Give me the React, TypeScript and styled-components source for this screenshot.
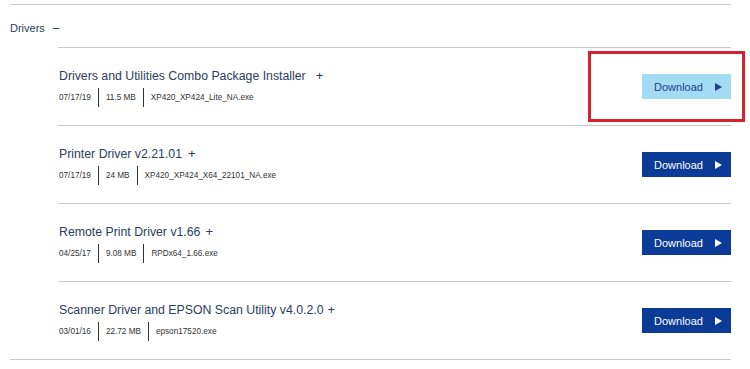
import styled, { createGlobalStyle } from 'styled-components';

const GlobalStyle = createGlobalStyle`
  body {
    margin: 0;
    background: #fff;
    font-family: "Liberation Sans", Arial, sans-serif;
  }
`;

const Section = styled.section`
  width: 721px;
  margin: 4px 0 0 10px;
  border-top: 1px solid #c8c8c8;
  border-bottom: 1px solid #c8c8c8;
`;

const SectionHeader = styled.div`
  display: flex;
  align-items: center;
  gap: 8px;
  height: 42px;
  padding-top: 4px;
  box-sizing: border-box;
  font-size: 11px;
  color: #2b3d5e;
`;

const Toggle = styled.span`
  font-size: 12px;
  color: #2b3d5e;
`;

const FileList = styled.ul`
  list-style: none;
  margin: 0 0 0 48px;
  padding: 0;
`;

const FileRow = styled.li`
  display: flex;
  align-items: center;
  justify-content: space-between;
  height: 77px;
  border-top: 1px solid #c8c8c8;
  position: relative;
`;

const Info = styled.div`
  display: flex;
  flex-direction: column;
  gap: 5px;
  padding: 2px 0 0 1px;
`;

const Title = styled.div`
  font-size: 12.3px;
  color: #2b3d5e;
  display: flex;
  align-items: center;
`;

const Plus = styled.span<{ $gap: number }>`
  margin-left: ${(p) => p.$gap}px;
  font-size: 13px;
`;

const Meta = styled.div`
  display: flex;
  align-items: center;
  font-size: 8.2px;
  color: #333;
`;

const MetaItem = styled.span`
  padding: 0 7px;
  line-height: 19px;
  border-left: 1px solid #333;

  &:first-child {
    padding-left: 0;
    border-left: none;
  }
`;

const DownloadButton = styled.button<{ $active?: boolean }>`
  display: flex;
  align-items: center;
  justify-content: center;
  gap: 12px;
  width: 89px;
  height: 25px;
  border: none;
  padding: 0 0 0 3px;
  background: ${(p) => (p.$active ? '#a3daf4' : '#0b3a97')};
  color: ${(p) => (p.$active ? '#1d3f8a' : '#fff')};
  font-family: "Liberation Sans", Arial, sans-serif;
  font-size: 11px;
  cursor: pointer;
`;

const Highlight = styled.div`
  position: absolute;
  right: -14px;
  top: 3px;
  width: 151px;
  height: 65px;
  border: 3px solid #d2232e;
  pointer-events: none;
`;

const Arrow = () => (
  <svg width="7" height="8" viewBox="0 0 7 8" aria-hidden="true">
    <path d="M0 0 L7 4 L0 8 Z" fill="currentColor" />
  </svg>
);

const files = [
  {
    title: 'Drivers and Utilities Combo Package Installer',
    gap: 10,
    date: '07/17/19',
    size: '11.5 MB',
    name: 'XP420_XP424_Lite_NA.exe',
    active: true,
  },
  { title: 'Printer Driver v2.21.01', gap: 6, date: '07/17/19', size: '24 MB', name: 'XP420_XP424_X64_22101_NA.exe' },
  { title: 'Remote Print Driver v1.66', gap: 5, date: '04/25/17', size: '9.08 MB', name: 'RPDx64_1.66.exe' },
  { title: 'Scanner Driver and EPSON Scan Utility v4.0.2.0', gap: 4, date: '03/01/16', size: '22.72 MB', name: 'epson17520.exe' },
];

const App = () => (
  <>
    <GlobalStyle />
    <Section>
      <SectionHeader>
        Drivers <Toggle>–</Toggle>
      </SectionHeader>
      <FileList>
        {files.map((f) => (
          <FileRow key={f.name}>
            <Info>
              <Title>
                {f.title}
                <Plus $gap={f.gap}>+</Plus>
              </Title>
              <Meta>
                <MetaItem>{f.date}</MetaItem>
                <MetaItem>{f.size}</MetaItem>
                <MetaItem>{f.name}</MetaItem>
              </Meta>
            </Info>
            <DownloadButton $active={f.active}>
              Download <Arrow />
            </DownloadButton>
            {f.active && <Highlight />}
          </FileRow>
        ))}
      </FileList>
    </Section>
  </>
);

export default App;
